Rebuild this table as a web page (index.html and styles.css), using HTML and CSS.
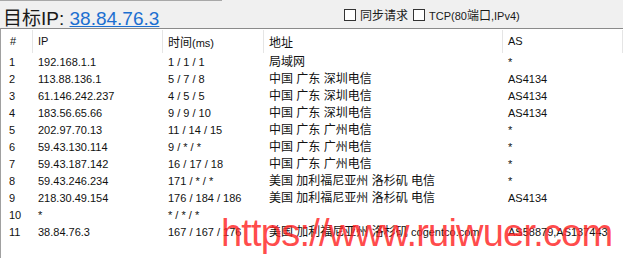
FILE: index.html
```html
<!DOCTYPE html>
<html lang="zh">
<head>
<meta charset="utf-8">
<title>路由追踪</title>
<link rel="stylesheet" href="styles.css">
</head>
<body>
<div class="app">
  <div class="topline"></div>
  <div class="topbar">
    <div class="title"><span class="cn">目标</span>IP: <a class="target" href="#">38.84.76.3</a></div>
    <div class="opts">
      <label class="opt"><span class="box"></span><span class="cn opt-cn">同步请求</span></label>
      <label class="opt"><span class="box"></span><span class="opt-lat">TCP(80<span class="cn">端口</span>,IPv4)</span></label>
    </div>
  </div>
  <div class="list">
    <div class="head">
      <div class="hc c1">#</div>
      <div class="hc">IP</div>
      <div class="hc"><span class="cn">时间</span>(ms)</div>
      <div class="hc cn">地址</div>
      <div class="hc">AS</div>
    </div>
    <div class="row"><div class="c c1">1</div><div class="c">192.168.1.1</div><div class="c">1 / 1 / 1</div><div class="c addr">局域网</div><div class="c">*</div></div>
    <div class="row"><div class="c c1">2</div><div class="c">113.88.136.1</div><div class="c">5 / 7 / 8</div><div class="c addr">中国 广东 深圳电信</div><div class="c">AS4134</div></div>
    <div class="row"><div class="c c1">3</div><div class="c">61.146.242.237</div><div class="c">4 / 5 / 5</div><div class="c addr">中国 广东 深圳电信</div><div class="c">AS4134</div></div>
    <div class="row"><div class="c c1">4</div><div class="c">183.56.65.66</div><div class="c">9 / 9 / 10</div><div class="c addr">中国 广东 深圳电信</div><div class="c">AS4134</div></div>
    <div class="row"><div class="c c1">5</div><div class="c">202.97.70.13</div><div class="c">11 / 14 / 15</div><div class="c addr">中国 广东 广州电信</div><div class="c">*</div></div>
    <div class="row"><div class="c c1">6</div><div class="c">59.43.130.114</div><div class="c">9 / * / *</div><div class="c addr">中国 广东 广州电信</div><div class="c">*</div></div>
    <div class="row"><div class="c c1">7</div><div class="c">59.43.187.142</div><div class="c">16 / 17 / 18</div><div class="c addr">中国 广东 广州电信</div><div class="c">*</div></div>
    <div class="row"><div class="c c1">8</div><div class="c">59.43.246.234</div><div class="c">171 / * / *</div><div class="c addr">美国 加利福尼亚州 洛杉矶 电信</div><div class="c">*</div></div>
    <div class="row"><div class="c c1">9</div><div class="c">218.30.49.154</div><div class="c">176 / 184 / 186</div><div class="c addr">美国 加利福尼亚州 洛杉矶 电信</div><div class="c">AS4134</div></div>
    <div class="row"><div class="c c1">10</div><div class="c">*</div><div class="c">* / * / *</div><div class="c addr"></div><div class="c"></div></div>
    <div class="row"><div class="c c1">11</div><div class="c">38.84.76.3</div><div class="c">167 / 167 / 176</div><div class="c addr">美国 加利福尼亚州 洛杉矶 <span class="lat">cogentco.com</span></div><div class="c">AS58879,AS137443</div></div>
  </div>
  <div class="watermark">https://www.ruiwuer.com</div>
</div>
</body>
</html>
```
FILE: styles.css
```css
html, body {
  margin: 0;
  padding: 0;
  background: #ffffff;
}
body {
  width: 623px;
  height: 258px;
  overflow: hidden;
  font-family: "Liberation Sans", "Noto Sans CJK SC", sans-serif;
  font-size: 11px;
  color: #111;
}
.app {
  position: relative;
  width: 623px;
  height: 258px;
  background: #f0f0f0;
  overflow: hidden;
}
.cn {
  font-family: "Noto Sans CJK SC", sans-serif;
}
.topline {
  width: 222px;
  height: 1px;
  background: #a8a8a8;
}
.topbar {
  height: 27px;
  display: flex;
  padding-left: 3px;
}
.title {
  width: 341px;
  font-size: 19px;
  line-height: 24px;
  padding-top: 4px;
  color: #1a1a1a;
  white-space: nowrap;
}
.target {
  color: #1c6fd0;
  text-decoration: underline;
}
.opts {
  display: flex;
  align-items: flex-start;
  padding-top: 7px;
  gap: 5px;
}
.opt {
  display: flex;
  align-items: center;
  gap: 4px;
  height: 14px;
}
.box {
  width: 10px;
  height: 10px;
  border: 1px solid #333;
  background: #fff;
}
.opt-cn {
  font-size: 12px;
  line-height: 14px;
  color: #1a1a1a;
}
.opt-lat {
  font-size: 11px;
  line-height: 14px;
  color: #1a1a1a;
}
.opt-lat .cn {
  font-size: 12px;
}
.list {
  border-top: 1px solid #8a8a8a;
  border-left: 1px solid #a0a0a0;
  background: #fff;
  height: 229px;
}
.head {
  display: grid;
  grid-template-columns: 32px 130px 101px 239px 120px;
  padding-top: 1px;
  box-sizing: border-box;
  height: 25px;
}
.hc {
  height: 23px;
  line-height: 23px;
  padding-left: 5px;
  border-right: 1px solid #e5e5e5;
  white-space: nowrap;
}
.hc.cn {
  font-size: 12px;
}
.hc .cn {
  font-size: 12px;
}
.hc.c1 {
  padding-left: 9px;
}
.row {
  display: grid;
  grid-template-columns: 32px 130px 101px 239px 120px;
  height: 17px;
}
.c {
  line-height: 17px;
  padding-left: 5px;
  white-space: nowrap;
}
.c.c1 {
  padding-left: 8px;
}
.addr {
  font-size: 12px;
}
.addr .lat {
  font-size: 11px;
}
.watermark {
  position: absolute;
  left: 221px;
  top: 214px;
  font-family: "Liberation Sans", sans-serif;
  font-size: 38px;
  line-height: 38px;
  letter-spacing: -0.8px;
  color: rgba(255, 35, 35, 0.82);
  white-space: nowrap;
}
```
